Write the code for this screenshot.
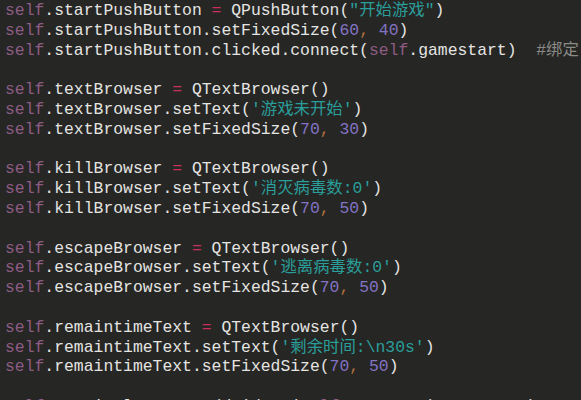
const lines = [
  'self.startPushButton = QPushButton("开始游戏")',
  'self.startPushButton.setFixedSize(60, 40)',
  'self.startPushButton.clicked.connect(self.gamestart)  #绑定',
  '',
  'self.textBrowser = QTextBrowser()',
  "self.textBrowser.setText('游戏未开始')",
  'self.textBrowser.setFixedSize(70, 30)',
  '',
  'self.killBrowser = QTextBrowser()',
  "self.killBrowser.setText('消灭病毒数:0')",
  'self.killBrowser.setFixedSize(70, 50)',
  '',
  'self.escapeBrowser = QTextBrowser()',
  "self.escapeBrowser.setText('逃离病毒数:0')",
  'self.escapeBrowser.setFixedSize(70, 50)',
  '',
  'self.remaintimeText = QTextBrowser()',
  "self.remaintimeText.setText('剩余时间:\\n30s')",
  'self.remaintimeText.setFixedSize(70, 50)',
  '',
  'self.verticalLayout.addWidget(self.startPushButton, 1)',
]

const colours: Record<string, string> = {
  self: 'text-[#8d5c84]',
  str: 'text-[#2a9e9a]',
  num: 'text-[#8373c4]',
  op: 'text-[#c8315e]',
  comma: 'text-[#b2703f]',
  comment: 'text-[#8a8a86]',
}

// tiny python-ish highlighter, good enough for these lines
function tokenize(line: string) {
  const re = /(#.*$)|('[^']*'|"[^"]*")|\bself\b|\d+|=|,/g
  const out: { text: string; kind?: string }[] = []
  let last = 0
  let m: RegExpExecArray | null
  while ((m = re.exec(line))) {
    if (m.index > last) out.push({ text: line.slice(last, m.index) })
    const t = m[0]
    let kind = 'num'
    if (m[1]) kind = 'comment'
    else if (m[2]) kind = 'str'
    else if (t === 'self') kind = 'self'
    else if (t === '=') kind = 'op'
    else if (t === ',') kind = 'comma'
    out.push({ text: t, kind })
    last = m.index + t.length
  }
  if (last < line.length) out.push({ text: line.slice(last) })
  return out
}

export default function App() {
  return (
    <div className="w-[581px] h-[400px] overflow-hidden bg-[#262624] pl-[5px] pt-[1px] font-['Liberation_Mono','Noto_Sans_CJK_SC',monospace] text-[16.4px] leading-[19.8px] text-[#e4e4e2] whitespace-pre">
      {lines.map((line, i) => (
        <div key={i} className="h-[19.8px]">
          {tokenize(line).map((tok, j) => (
            <span key={j} className={tok.kind ? colours[tok.kind] : undefined}>
              {tok.text}
            </span>
          ))}
        </div>
      ))}
    </div>
  )
}
